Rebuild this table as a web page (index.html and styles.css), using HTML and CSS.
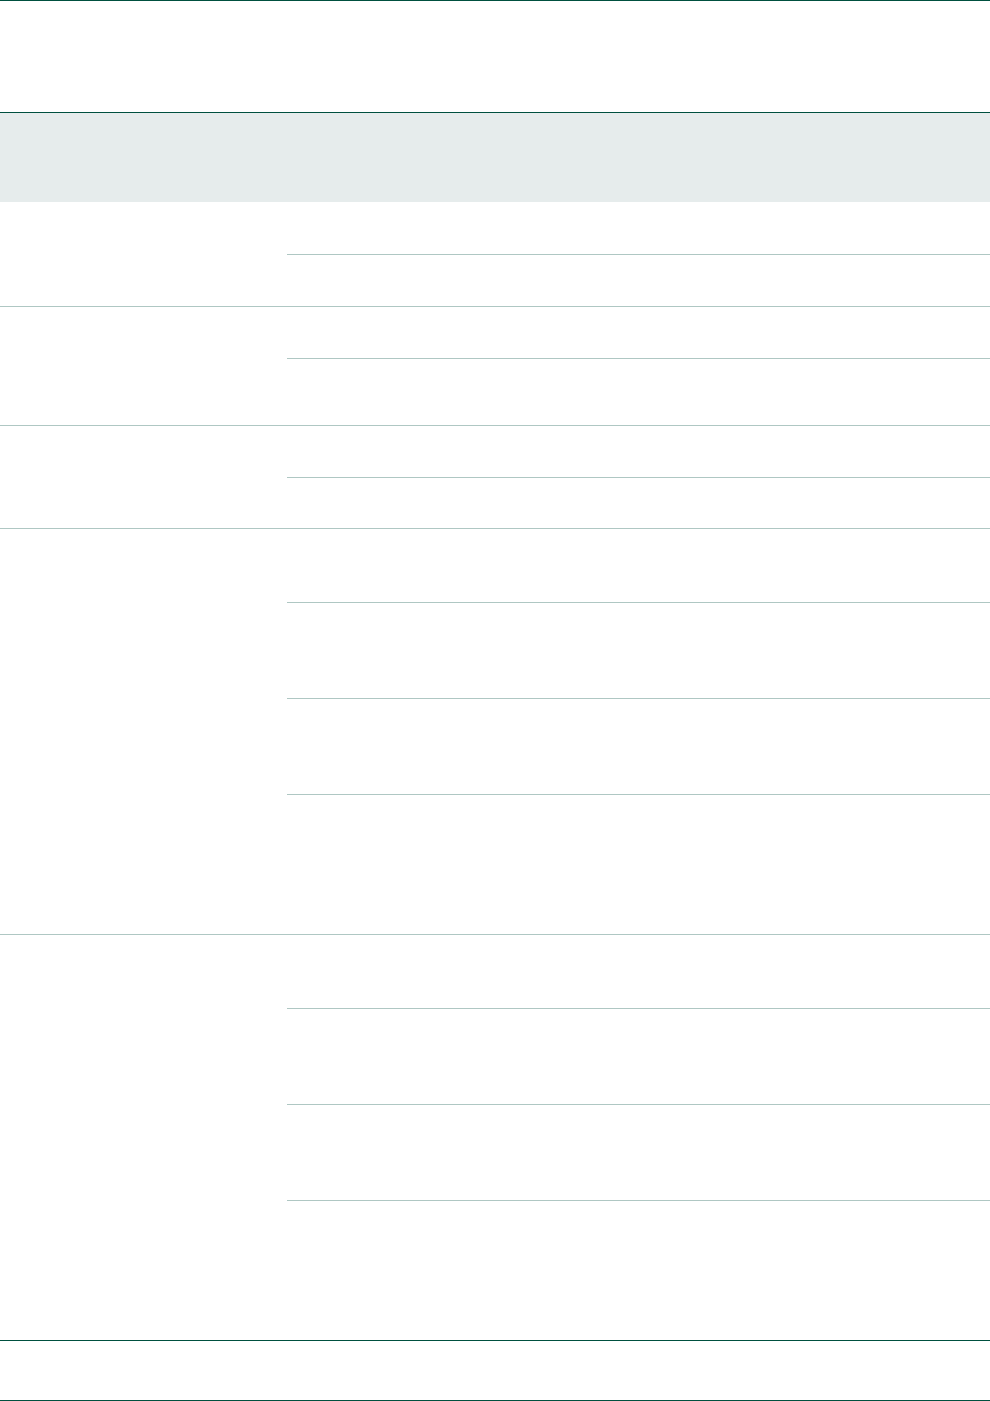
FILE: index.html
```html
<!DOCTYPE html>
<html lang="en">
<head>
    <meta charset="UTF-8">
    <meta name="viewport" content="width=device-width, initial-scale=1.0">
    <title>Table</title>
    <link rel="stylesheet" href="styles.css">
</head>
<body>
    <div class="sheet">
        <!-- Header -->
        <div class="sheet-head"></div>
        <div class="sheet-band"></div>

        <!-- Groups -->
        <div class="group">
            <div class="group-label"></div>
            <div class="group-rows">
                <div class="row h52"></div>
                <div class="row h51"></div>
            </div>
        </div>

        <div class="group">
            <div class="group-label"></div>
            <div class="group-rows">
                <div class="row h51"></div>
                <div class="row h66"></div>
            </div>
        </div>

        <div class="group">
            <div class="group-label"></div>
            <div class="group-rows">
                <div class="row h51"></div>
                <div class="row h50"></div>
            </div>
        </div>

        <div class="group">
            <div class="group-label"></div>
            <div class="group-rows">
                <div class="row h73"></div>
                <div class="row h95"></div>
                <div class="row h95"></div>
                <div class="row h139"></div>
            </div>
        </div>

        <div class="group group-last">
            <div class="group-label"></div>
            <div class="group-rows">
                <div class="row h73"></div>
                <div class="row h95"></div>
                <div class="row h95"></div>
                <div class="row h139"></div>
            </div>
        </div>

        <!-- Footer -->
        <div class="sheet-foot"></div>
    </div>
</body>
</html>
```

FILE: styles.css
```css
/* Reset */
* {
    margin: 0;
    padding: 0;
    box-sizing: content-box;
}

body {
    font-family: 'Liberation Sans', Arial, sans-serif;
    color: #333;
    background: #fff;
}

/* Sheet */
.sheet {
    width: 100%;
}

.sheet-head {
    height: 111px;
    border-top: 1px solid #00503f;
    border-bottom: 1px solid #00503f;
}

.sheet-band {
    height: 89px;
    background: #e6ecec;
}

/* Groups */
.group {
    display: flex;
    border-bottom: 1px solid #afc7c3;
}

.group-last {
    border-bottom-color: #00503f;
}

.group-label {
    width: 287px;
    flex-shrink: 0;
}

.group-rows {
    flex: 1;
}

.row {
    border-bottom: 1px solid #afc7c3;
}

.row:last-child {
    border-bottom: none;
}

.h50 { height: 50px; }
.h51 { height: 51px; }
.h52 { height: 52px; }
.h66 { height: 66px; }
.h73 { height: 73px; }
.h95 { height: 95px; }
.h139 { height: 139px; }

/* Footer */
.sheet-foot {
    height: 59px;
    border-bottom: 1px solid #00503f;
}
```
